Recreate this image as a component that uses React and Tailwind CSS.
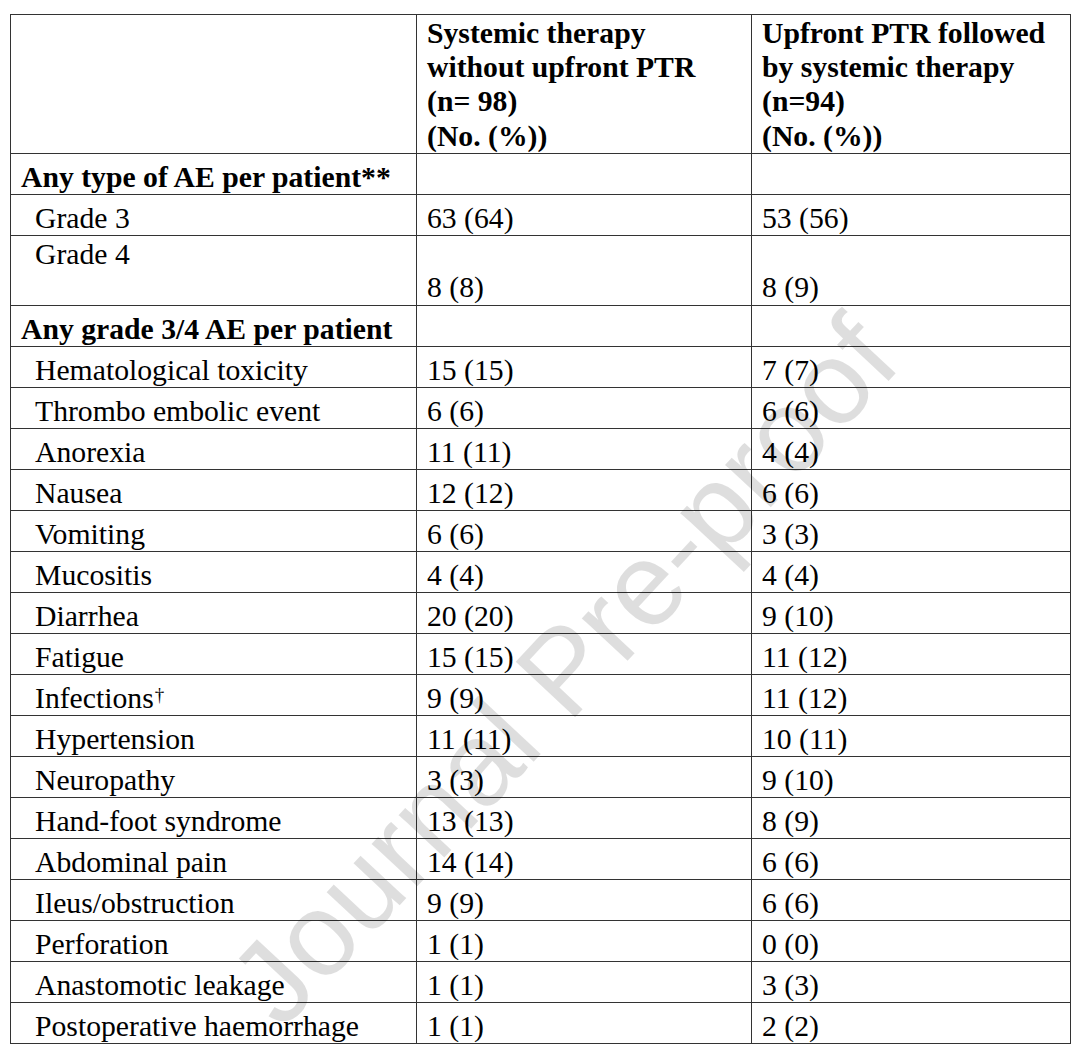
import React from 'react';

const rows = [
  { label: 'Hematological toxicity', a: '15 (15)', b: '7 (7)' },
  { label: 'Thrombo embolic event', a: '6 (6)', b: '6 (6)' },
  { label: 'Anorexia', a: '11 (11)', b: '4 (4)' },
  { label: 'Nausea', a: '12 (12)', b: '6 (6)' },
  { label: 'Vomiting', a: '6 (6)', b: '3 (3)' },
  { label: 'Mucositis', a: '4 (4)', b: '4 (4)' },
  { label: 'Diarrhea', a: '20 (20)', b: '9 (10)' },
  { label: 'Fatigue', a: '15 (15)', b: '11 (12)' },
  { label: 'Infections', a: '9 (9)', b: '11 (12)', dagger: true },
  { label: 'Hypertension', a: '11 (11)', b: '10 (11)' },
  { label: 'Neuropathy', a: '3 (3)', b: '9 (10)' },
  { label: 'Hand-foot syndrome', a: '13 (13)', b: '8 (9)' },
  { label: 'Abdominal pain', a: '14 (14)', b: '6 (6)' },
  { label: 'Ileus/obstruction', a: '9 (9)', b: '6 (6)' },
  { label: 'Perforation', a: '1 (1)', b: '0 (0)' },
  { label: 'Anastomotic leakage', a: '1 (1)', b: '3 (3)' },
  { label: 'Postoperative haemorrhage', a: '1 (1)', b: '2 (2)' },
];

const cell = 'border border-[#333333] align-bottom p-0 pl-[10px]';

function Row({ label, a, b, dagger }) {
  return (
    <tr className="h-[41px]">
      <td className={cell + ' pl-[24px]'}>
        {label}
        {dagger && <span className="inline-block align-top text-[19px] leading-[19px] ml-[1px] mt-[4px]">†</span>}
      </td>
      <td className={cell}>{a}</td>
      <td className={cell}>{b}</td>
    </tr>
  );
}

export default function App() {
  return (
    <div className="relative w-[1080px] h-[1055px] bg-white overflow-hidden pl-[10px] pt-[14px] font-['Liberation_Serif','Times_New_Roman',serif] text-[29.7px] leading-[34.2px] text-black">
      <table className="table-fixed border-collapse w-[1060px]">
        <colgroup>
          <col className="w-[406px]" />
          <col className="w-[335px]" />
          <col className="w-[319px]" />
        </colgroup>
        <tbody>
          <tr className="h-[139px]">
            <td className={cell} />
            <td className="border border-[#333333] align-top p-0 pl-[10px] pt-[1px] font-bold">
              Systemic therapy
              <br />
              without upfront PTR
              <br />
              (n= 98)
              <br />
              (No. (%))
            </td>
            <td className="border border-[#333333] align-top p-0 pl-[10px] pt-[1px] font-bold">
              Upfront PTR followed
              <br />
              by systemic therapy
              <br />
              (n=94)
              <br />
              (No. (%))
            </td>
          </tr>
          <tr className="h-[41px]">
            <td className={cell + ' font-bold'}>Any type of AE per patient**</td>
            <td className={cell} />
            <td className={cell} />
          </tr>
          <tr className="h-[41px]">
            <td className={cell + ' pl-[24px]'}>Grade 3</td>
            <td className={cell}>63 (64)</td>
            <td className={cell}>53 (56)</td>
          </tr>
          <tr className="h-[70px]">
            <td className="border border-[#333333] align-top p-0 pl-[24px] pt-[1px]">Grade 4</td>
            <td className={cell + ' pb-[1px]'}>8 (8)</td>
            <td className={cell + ' pb-[1px]'}>8 (9)</td>
          </tr>
          <tr className="h-[41px]">
            <td className={cell + ' font-bold'}>Any grade 3/4 AE per patient</td>
            <td className={cell} />
            <td className={cell} />
          </tr>
          {rows.map((r) => (
            <Row key={r.label} {...r} />
          ))}
        </tbody>
      </table>

      {/* watermark */}
      <div className="pointer-events-none absolute left-[563px] top-[670px] -translate-x-1/2 -translate-y-1/2 -rotate-[47deg] whitespace-nowrap font-['Liberation_Sans',Arial,sans-serif] text-[118px] leading-none text-black/[0.13]">
        Journal Pre-proof
      </div>
    </div>
  );
}
